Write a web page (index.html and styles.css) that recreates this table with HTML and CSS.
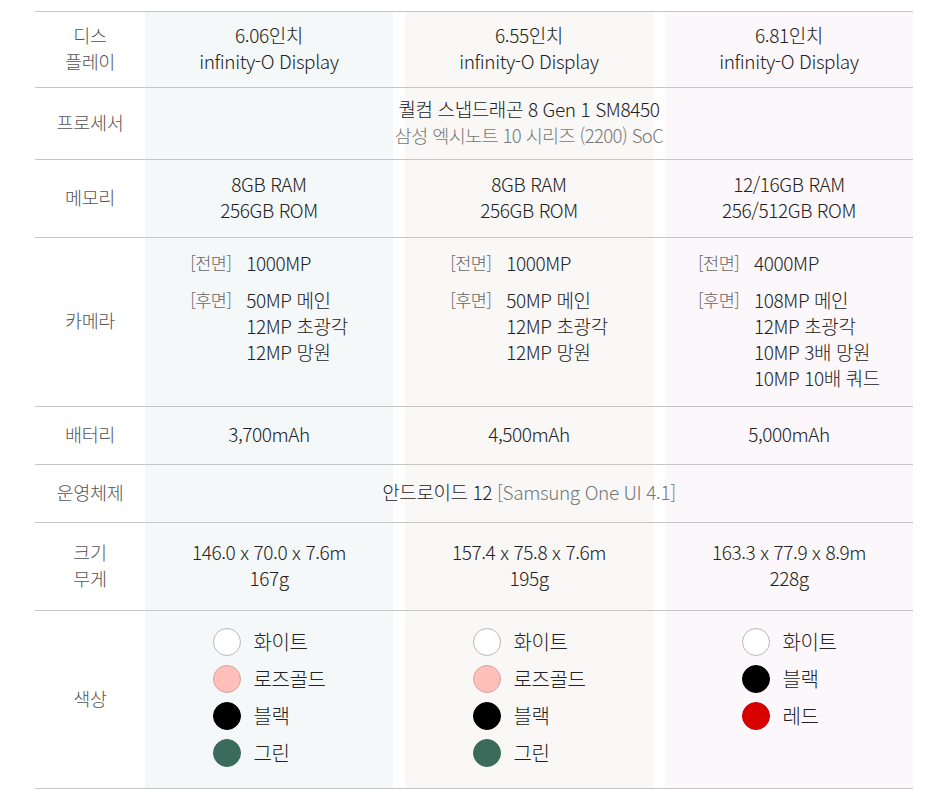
FILE: index.html
```html
<!DOCTYPE html>
<html lang="ko">
<head>
<meta charset="utf-8">
<link rel="stylesheet" href="styles.css">
</head>
<body>
<div class="spec">
  <div class="row r-display">
    <div class="label">디스<br>플레이</div>
    <div class="cell c1">6.06인치<br>infinity-O Display</div>
    <div class="cell c2">6.55인치<br>infinity-O Display</div>
    <div class="cell c3">6.81인치<br>infinity-O Display</div>
  </div>
  <div class="row r-cpu">
    <div class="label">프로세서</div>
    <div class="cell c1"></div>
    <div class="cell c2"></div>
    <div class="cell c3"></div>
    <div class="span">퀄컴 스냅드래곤 8 Gen 1 SM8450<br><span class="sub">삼성 엑시노트 10 시리즈 (2200) SoC</span></div>
  </div>
  <div class="row r-mem">
    <div class="label">메모리</div>
    <div class="cell c1">8GB RAM<br>256GB ROM</div>
    <div class="cell c2">8GB RAM<br>256GB ROM</div>
    <div class="cell c3">12/16GB RAM<br>256/512GB ROM</div>
  </div>
  <div class="row r-cam">
    <div class="label">카메라</div>
    <div class="cell c1 top">
      <div class="cam">
        <div class="cam-line"><span class="tag">[전면]</span><span class="val">1000MP</span></div>
        <div class="cam-line"><span class="tag">[후면]</span><span class="val">50MP 메인<br>12MP 초광각<br>12MP 망원</span></div>
      </div>
    </div>
    <div class="cell c2 top">
      <div class="cam">
        <div class="cam-line"><span class="tag">[전면]</span><span class="val">1000MP</span></div>
        <div class="cam-line"><span class="tag">[후면]</span><span class="val">50MP 메인<br>12MP 초광각<br>12MP 망원</span></div>
      </div>
    </div>
    <div class="cell c3 top">
      <div class="cam">
        <div class="cam-line"><span class="tag">[전면]</span><span class="val">4000MP</span></div>
        <div class="cam-line"><span class="tag">[후면]</span><span class="val">108MP 메인<br>12MP 초광각<br>10MP 3배 망원<br>10MP 10배 쿼드</span></div>
      </div>
    </div>
  </div>
  <div class="row r-bat">
    <div class="label">배터리</div>
    <div class="cell c1">3,700mAh</div>
    <div class="cell c2">4,500mAh</div>
    <div class="cell c3">5,000mAh</div>
  </div>
  <div class="row r-os">
    <div class="label">운영체제</div>
    <div class="cell c1"></div>
    <div class="cell c2"></div>
    <div class="cell c3"></div>
    <div class="span">안드로이드 12 <span class="sub">[Samsung One UI 4.1]</span></div>
  </div>
  <div class="row r-size">
    <div class="label">크기<br>무게</div>
    <div class="cell c1">146.0 x 70.0 x 7.6m<br>167g</div>
    <div class="cell c2">157.4 x 75.8 x 7.6m<br>195g</div>
    <div class="cell c3">163.3 x 77.9 x 8.9m<br>228g</div>
  </div>
  <div class="row r-color">
    <div class="label">색상</div>
    <div class="cell c1 top">
      <ul class="colors">
        <li><i class="dot white"></i>화이트</li>
        <li><i class="dot rose"></i>로즈골드</li>
        <li><i class="dot black"></i>블랙</li>
        <li><i class="dot green"></i>그린</li>
      </ul>
    </div>
    <div class="cell c2 top">
      <ul class="colors">
        <li><i class="dot white"></i>화이트</li>
        <li><i class="dot rose"></i>로즈골드</li>
        <li><i class="dot black"></i>블랙</li>
        <li><i class="dot green"></i>그린</li>
      </ul>
    </div>
    <div class="cell c3 top">
      <ul class="colors">
        <li><i class="dot white"></i>화이트</li>
        <li><i class="dot black"></i>블랙</li>
        <li><i class="dot red"></i>레드</li>
      </ul>
    </div>
  </div>
</div>
</body>
</html>
```

FILE: styles.css
```css
html, body {
  margin: 0;
  padding: 0;
  background: #fff;
}
body {
  font-family: "Noto Sans CJK KR", "Noto Sans", sans-serif;
  font-weight: 300;
  color: #222;
  letter-spacing: -0.4px;
}
.spec {
  margin: 11px 20px 0 35px;
  width: 878px;
  border-top: 1px solid #c6c6c6;
}
.row {
  display: grid;
  grid-template-columns: 98px 1fr 1fr 1fr;
  column-gap: 12px;
  border-bottom: 1px solid #c6c6c6;
}
.label {
  grid-row: 1;
  grid-column: 1;
  padding: 0 0 4px 12px;
  display: flex;
  align-items: center;
  justify-content: center;
  text-align: center;
  font-size: 18.5px;
  letter-spacing: -0.3px;
  line-height: 26px;
  color: #555;
}
.cell {
  grid-row: 1;
  display: flex;
  flex-direction: column;
  align-items: center;
  justify-content: center;
  text-align: center;
  font-size: 19px;
  line-height: 26px;
  padding-bottom: 4px;
}
.cell.top { justify-content: flex-start; }
.c1 { grid-column: 2; background: #f5f8f9; }
.c2 { grid-column: 3; background: #f9f8f7; }
.c3 { grid-column: 4; background: #fcf7fa; }
.span {
  grid-row: 1;
  grid-column: 2 / 5;
  align-self: center;
  text-align: center;
  font-size: 19px;
  line-height: 26px;
  padding-bottom: 4px;
}
.sub { color: #777; }
.r-cpu .sub { font-size: 18.5px; letter-spacing: -0.6px; }

.r-display { height: 75px; }
.r-cpu { height: 71px; }
.r-mem { height: 77px; }
.r-bat { height: 57px; }
.r-os { height: 57px; }
.r-size { height: 87px; }

.r-cam .cell { padding: 12px 0 15px; }
.cam { text-align: left; }
.cam-line { display: flex; }
.cam-line + .cam-line { margin-top: 11px; }
.tag {
  width: 56px;
  flex: none;
  font-size: 17.5px;
  letter-spacing: -0.5px;
  color: #666;
}

.r-color .cell { padding: 17px 0 12px; }
.colors {
  list-style: none;
  margin: 0;
  padding: 0;
  text-align: left;
}
.colors li {
  display: flex;
  align-items: center;
  height: 28px;
  margin-bottom: 9px;
  font-size: 20px;
}
.dot {
  width: 26px;
  height: 26px;
  border-radius: 50%;
  border: 1px solid transparent;
  margin-right: 13px;
  flex: none;
}
.dot.white { background: #fff; border-color: #b9b9b9; }
.dot.rose { background: #fec0b8; border-color: #d7a49d; }
.dot.black { background: #000; border-color: #000; }
.dot.green { background: #3a6b5b; border-color: #3a6b5b; }
.dot.red { background: #d90000; border-color: #c40000; }
```
